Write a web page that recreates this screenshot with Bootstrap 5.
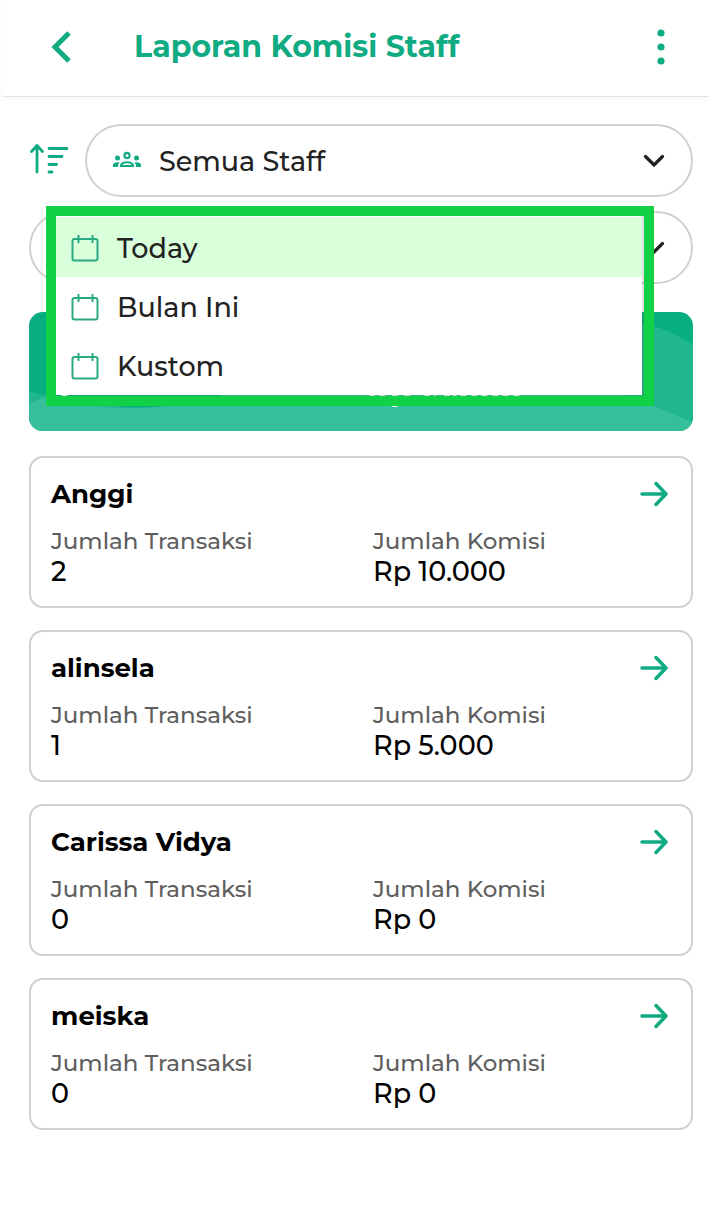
<!DOCTYPE html>
<html lang="id">
<head>
<meta charset="utf-8">
<meta name="viewport" content="width=device-width, initial-scale=1">
<title>Laporan Komisi Staff</title>
<link href="https://cdn.jsdelivr.net/npm/bootstrap@5.3.0/dist/css/bootstrap.min.css" rel="stylesheet">
<style>
:root { --brand: #10ab82; --ink: #222; --line: #d0d0d0; }
body { font-family: Montserrat, Inter, sans-serif; color: #000; background: #fff; }
svg { display: block; flex: none; }
.bare { background: none; border: 0; padding: 0; color: var(--brand); }
.topbar { height: 97px; padding: 0 40px 3px 47px; margin-left: 1px; border-bottom: 1px solid #e2e2e2; border-bottom-left-radius: 4px; box-shadow: 0 2px 4px rgba(0,0,0,.04); }
.topbar h1 { font-size: 30px; line-height: 40px; font-weight: 700; color: var(--brand); margin-left: 60px; }
.page { padding: 27px 16px 28px 29px; }
.filters { display: grid; gap: 14px; }
.pill { height: 73px; border: 2px solid var(--line); border-radius: 37px; background: #fff; width: 100%; }
.staff-pick { appearance: none; font-size: 27px; font-weight: 500; color: var(--ink); padding: 3px 72px 0; }
.pill-icon { position: absolute; left: 26px; top: 23px; color: var(--brand); pointer-events: none; }
.pill-arrow { position: absolute; right: 28px; top: 26px; color: var(--ink); pointer-events: none; }
.period-frame { position: absolute; left: 17px; right: 39px; top: -5px; z-index: 5; border: 10px solid #11d145; padding: 0 2px 1px 0; background: rgba(90,90,90,.18); }
.period-list { background: #fff; padding-top: 1px; }
.period-item { display: flex; align-items: center; width: 100%; height: 59px; gap: 18px; padding: 3px 15px 0; border: 0; background: #fff; font-size: 27px; line-height: 40px; font-weight: 500; color: var(--ink); text-align: left; }
.period-item.chosen { background: #d9ffdb; height: 60px; }
.period-item svg { color: #2aaa83; }
.total { margin-top: 28px; height: 119px; border-radius: 14px; background: #07ae82; overflow: hidden; color: #fff; position: relative; }
.total svg { position: absolute; width: 100%; height: 100%; }
.total-row { position: relative; padding: 62px 33px 0 21px; font-size: 31px; line-height: 32px; font-weight: 700; }
.pair { display: grid; grid-template-columns: 1fr 1fr; column-gap: 24px; }
.cards { margin-top: 25px; display: grid; gap: 22px; }
.staff { border: 2px solid var(--line); border-radius: 14px; padding: 18px 20px 18px; }
.staff h2 { font-size: 26px; line-height: 36px; font-weight: 700; margin: 0; }
.staff dl { margin: 14px 0 0; }
.staff dt { font-size: 23px; line-height: 30px; font-weight: 500; color: #5e5e5e; }
.staff dd { font-size: 27px; line-height: 32px; font-weight: 500; margin: 0; }
.staff-link { margin-right: 3px; }
</style>
</head>
<body>
<svg width="0" height="0" class="position-absolute" aria-hidden="true">
  <symbol id="cal" viewBox="0 0 28 28"><g fill="none" stroke="currentColor" stroke-width="2"><rect x="1.500" y="4" width="25" height="21.500" rx="2"/><path d="M7.500 0v8M21.500 0v8"/></g></symbol>
  <symbol id="go" viewBox="0 0 28 26"><path d="M2 13h23M16 2.500 26 13 16 23.500" fill="none" stroke="currentColor" stroke-width="3.500" stroke-linecap="round" stroke-linejoin="round"/></symbol>
  <symbol id="down" viewBox="0 0 22 22"><path d="m2.500 6.500 8.500 8.500 8.500-8.500" fill="none" stroke="currentColor" stroke-width="3.200" stroke-linecap="round"/></symbol>
</svg>
<header class="topbar d-flex align-items-center">
  <button class="bare" aria-label="Kembali"><svg width="26" height="34" viewBox="0 0 26 34"><path d="M21 3 7 17l14 14" fill="none" stroke="currentColor" stroke-width="5"/></svg></button>
  <h1 class="mb-0">Laporan Komisi Staff</h1>
  <button class="bare ms-auto" aria-label="Menu"><svg width="16" height="36" viewBox="0 0 16 36" fill="currentColor"><circle cx="8" cy="4" r="3.600"/><circle cx="8" cy="18" r="3.600"/><circle cx="8" cy="32" r="3.600"/></svg></button>
</header>
<main class="page">
  <div class="filters">
    <div class="d-flex align-items-center">
      <button class="bare me-3 pb-1" aria-label="Urutkan"><svg width="40" height="32" viewBox="0 0 40 32" fill="none" stroke="currentColor" stroke-width="2.800" stroke-linecap="round" stroke-linejoin="round"><path d="M8 29V3M2.500 8.500 8 2.500l5.500 6M20 5.500h18M20 13.500h13M20 21.500h7.500M20 29h3"/></svg></button>
      <div class="position-relative flex-grow-1">
        <select class="pill staff-pick" aria-label="Staff"><option>Semua Staff</option></select>
        <svg class="pill-icon" width="32" height="28" viewBox="0 0 32 28" fill="currentColor"><circle cx="16" cy="8.500" r="2.600" fill="none" stroke="currentColor" stroke-width="2.200"/><circle cx="6.500" cy="11" r="2.500"/><circle cx="25.500" cy="11" r="2.500"/><path d="M2 20v-2c0-2 3-3 6.500-2.500C7.500 16.500 7 18 7 20zM30 20v-2c0-2-3-3-6.500-2.500 1 1 1.500 2.500 1.500 4.500z"/><path d="M10 19c0-5 12-5 12 0z" fill="none" stroke="currentColor" stroke-width="2.200"/></svg>
        <svg class="pill-arrow" width="22" height="22"><use href="#down"/></svg>
      </div>
    </div>
    <div class="position-relative">
      <button class="pill d-block" aria-label="Periode" aria-expanded="true"></button>
      <svg class="pill-arrow" width="22" height="22"><use href="#down"/></svg>
      <div class="period-frame">
        <div class="period-list" role="menu">
          <button class="period-item chosen" role="menuitem"><svg width="28" height="28"><use href="#cal"/></svg>Today</button>
          <button class="period-item" role="menuitem"><svg width="28" height="28"><use href="#cal"/></svg>Bulan Ini</button>
          <button class="period-item" role="menuitem"><svg width="28" height="28"><use href="#cal"/></svg>Kustom</button>
        </div>
      </div>
    </div>
  </div>
  <section class="total">
    <svg viewBox="0 0 664 119" preserveAspectRatio="none" aria-hidden="true"><path d="M430 119C480 20 590-20 664 33v86z" fill="#20b78f"/><path d="M0 79c70 22 220 26 320 0v40H0z" fill="#20b78f"/><path d="M0 92C14 85 18 84 30 87 80 100 130 99 190 84 380 20 560 60 664 111v8H0z" fill="#35bf9b"/></svg>
    <div class="total-row pair"><span>3</span><span>Rp 15.000</span></div>
  </section>
  <div class="cards">
    <article class="staff"><div class="d-flex justify-content-between"><h2>Anggi</h2><a href="#" class="bare staff-link" aria-label="Lihat Anggi"><svg width="28" height="36"><use href="#go"/></svg></a></div>
      <dl class="pair"><div><dt>Jumlah Transaksi</dt><dd>2</dd></div><div><dt>Jumlah Komisi</dt><dd>Rp 10.000</dd></div></dl></article>
    <article class="staff"><div class="d-flex justify-content-between"><h2>alinsela</h2><a href="#" class="bare staff-link" aria-label="Lihat alinsela"><svg width="28" height="36"><use href="#go"/></svg></a></div>
      <dl class="pair"><div><dt>Jumlah Transaksi</dt><dd>1</dd></div><div><dt>Jumlah Komisi</dt><dd>Rp 5.000</dd></div></dl></article>
    <article class="staff"><div class="d-flex justify-content-between"><h2>Carissa Vidya</h2><a href="#" class="bare staff-link" aria-label="Lihat Carissa Vidya"><svg width="28" height="36"><use href="#go"/></svg></a></div>
      <dl class="pair"><div><dt>Jumlah Transaksi</dt><dd>0</dd></div><div><dt>Jumlah Komisi</dt><dd>Rp 0</dd></div></dl></article>
    <article class="staff"><div class="d-flex justify-content-between"><h2>meiska</h2><a href="#" class="bare staff-link" aria-label="Lihat meiska"><svg width="28" height="36"><use href="#go"/></svg></a></div>
      <dl class="pair"><div><dt>Jumlah Transaksi</dt><dd>0</dd></div><div><dt>Jumlah Komisi</dt><dd>Rp 0</dd></div></dl></article>
  </div>
</main>
<script src="https://cdn.jsdelivr.net/npm/bootstrap@5.3.0/dist/js/bootstrap.bundle.min.js"></script>
</body>
</html>
